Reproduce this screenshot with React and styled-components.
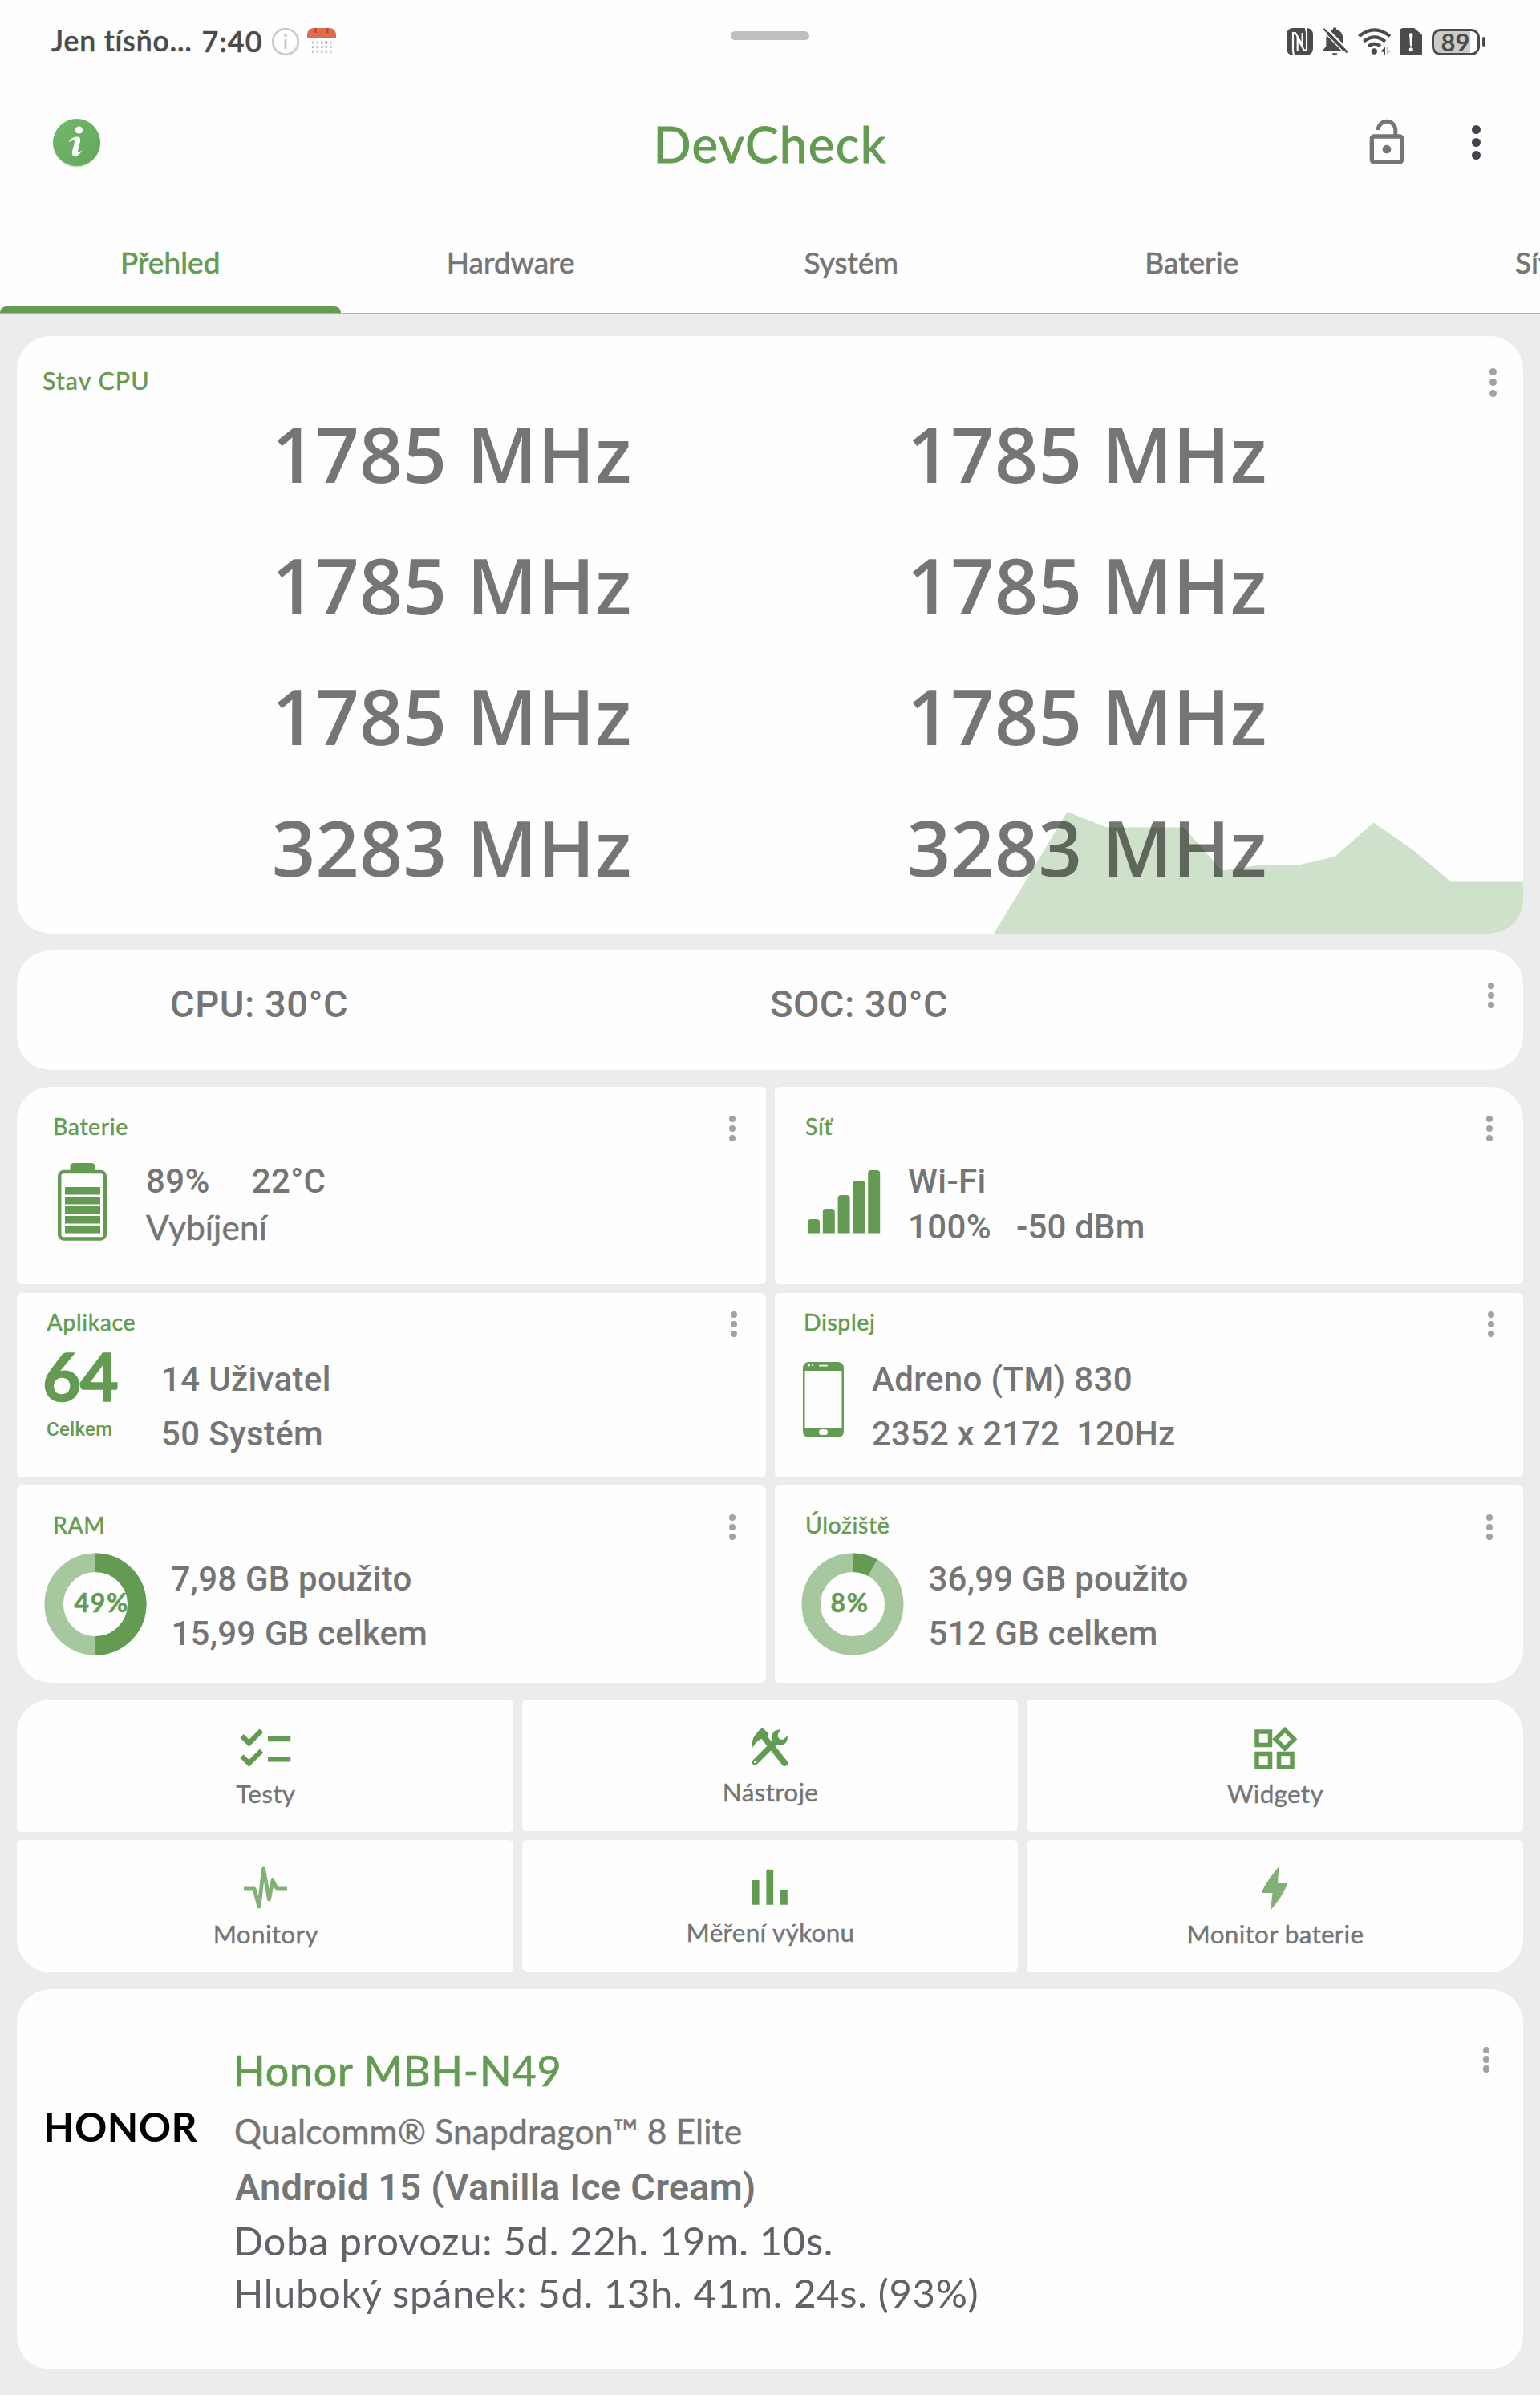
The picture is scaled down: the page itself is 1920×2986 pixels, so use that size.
import React from "react";
import styled, { createGlobalStyle } from "styled-components";

const GREEN = "#649b52";
const GREEN_SOFT = "#a7c79f";
const GREY = "#757575";
const LATO = '"Lato", "Open Sans", sans-serif';
const ROBOTO = '"Roboto", "Open Sans", sans-serif';
const OPEN = '"Open Sans", "Noto Sans", sans-serif';

const GlobalStyle = createGlobalStyle`
  * { box-sizing: border-box; }
  html, body { margin: 0; background: #ececec; }
  body { width: 1920px; height: 2986px; overflow: hidden; font-family: ${LATO}; }
  svg { display: block; flex: none; }
`;

const Text = styled.span`
  display: block;
  width: max-content;
  white-space: pre;
  line-height: ${(p) => (p.$lh ? p.$lh + "px" : 1)};
  font-family: ${(p) => p.$font || LATO};
  font-size: ${(p) => p.$size}px;
  font-weight: ${(p) => p.$weight || 400};
  color: ${(p) => p.$color || GREY};
  letter-spacing: ${(p) => p.$ls || 0}px;
  margin-top: ${(p) => p.$mt || 0}px;
  margin-left: ${(p) => p.$ml || 0}px;
  -webkit-text-stroke: ${(p) => p.$stroke || 0}px currentColor;
`;

/* ---------- header ---------- */

const Header = styled.header`
  height: 391px;
  background: #fefefe;
  border-bottom: 1px solid #b3b0b4;
  overflow: hidden;
`;

const StatusBar = styled.div`
  display: grid;
  grid-template-columns: 1fr 98px 1fr;
  align-items: center;
  height: 104px;
  padding: 0 68px 0 64px;
`;

const StatusLeft = styled.div`
  display: flex;
  align-items: center;
`;

const Handle = styled.div`
  height: 11px;
  margin-top: -16px;
  margin-left: 2px;
  margin-right: -2px;
  border-radius: 6px;
  background: #bfbfbf;
`;

const StatusRight = styled.div`
  display: flex;
  align-items: center;
  justify-content: flex-end;
`;

const Gap = styled.i`
  flex: none;
  width: ${(p) => p.$w}px;
`;

const BatteryPill = styled.div`
  display: flex;
  align-items: center;
  justify-content: center;
  width: 60px;
  height: 33px;
  border: 3px solid #4b4b4b;
  border-radius: 11px;
  background: linear-gradient(90deg, #cbcbcb 83%, #fefefe 83%);
`;

const BatteryNub = styled.div`
  width: 4px;
  height: 12px;
  margin-left: 3px;
  border-radius: 2px;
  background: #4b4b4b;
`;

const AppBar = styled.div`
  display: grid;
  grid-template-columns: 1fr auto 1fr;
  align-items: center;
  height: 147px;
  padding: 0 64px;
`;

const InfoBadge = styled.div`
  width: 62px;
  height: 62px;
`;

const Actions = styled.div`
  display: flex;
  align-items: center;
  justify-content: flex-end;
  gap: 74px;
  padding-right: 10px;
`;

const Tabs = styled.nav`
  display: flex;
  height: 139px;
`;

const Tab = styled.div`
  flex: none;
  display: flex;
  flex-direction: column;
  align-items: center;
  justify-content: space-between;
  width: 424.5px;
  padding-top: 57px;
`;

const Indicator = styled.div`
  width: 100%;
  height: 8px;
  border-radius: 8px 8px 0 0;
  background: ${(p) => (p.$on ? GREEN : "transparent")};
`;

/* ---------- menu dots ---------- */

const DotColumn = styled.div`
  flex: none;
  display: flex;
  flex-direction: column;
  gap: ${(p) => p.$gap}px;
`;

const Dot = styled.i`
  width: ${(p) => p.$d}px;
  height: ${(p) => p.$d}px;
  border-radius: 50%;
  background: ${(p) => p.$color};
`;

function Dots({ d = 8.4, gap = 3.6, color = "#a2a2a2" }) {
  return (
    <DotColumn $gap={gap}>
      {[0, 1, 2].map((i) => (
        <Dot key={i} $d={d} $color={color} />
      ))}
    </DotColumn>
  );
}

/* ---------- cards ---------- */

const Main = styled.main`
  display: flex;
  flex-direction: column;
  gap: 21px;
  padding: 28px 21px 0;
`;

const Card = styled.section`
  position: relative;
  height: ${(p) => p.$h}px;
  background: #fefefe;
  border-radius: ${(p) => p.$r || "42px"};
  overflow: hidden;
`;

const CardHead = styled.div`
  display: flex;
  align-items: flex-start;
  justify-content: space-between;
  padding: ${(p) => p.$pad};
`;

const CpuHead = styled(CardHead)`
  height: 65px;
`;

const CpuGrid = styled.div`
  display: grid;
  grid-template-columns: 792px 792px;
  grid-auto-rows: 163.7px;
  align-items: center;
  justify-items: center;
  padding-left: 146px;
`;

const CpuChart = styled.svg`
  position: absolute;
  right: 0;
  bottom: 0;
`;

const CpuValues = styled.div`
  position: relative;
`;

const TempRow = styled.div`
  display: grid;
  grid-template-columns: 748px 1fr auto;
  padding: 40px 36px 0 191px;
`;

const StatGrid = styled.div`
  display: grid;
  grid-template-columns: 933.5px 933.5px;
  column-gap: 11px;
  row-gap: 10.5px;
`;

const StatBody = styled.div`
  display: flex;
  align-items: flex-start;
  padding-left: ${(p) => p.$left}px;
`;

const Slot = styled.div`
  flex: none;
  width: ${(p) => p.$w}px;
  padding-top: ${(p) => p.$top}px;
`;

const Lines = styled.div`
  padding-top: ${(p) => p.$top}px;
`;

const Pair = styled.div`
  display: flex;
`;

const ToolGrid = styled.div`
  display: grid;
  grid-template-columns: 619px 617.5px 619.5px;
  column-gap: 11px;
  row-gap: 10.5px;
  align-items: start;
`;

const ToolCard = styled(Card)`
  display: flex;
  flex-direction: column;
  align-items: center;
  padding-top: ${(p) => p.$top}px;
`;

const ToolIcon = styled.div`
  display: flex;
  align-items: center;
  justify-content: center;
  width: 76px;
  height: 76px;
  margin-bottom: ${(p) => p.$mb}px;
`;

const DeviceRow = styled.div`
  display: flex;
  align-items: flex-start;
  padding: 72px 42px 0 33px;
`;

const Logo = styled.div`
  width: 237px;
  padding-top: 74px;
`;

const DeviceInfo = styled.div`
  flex: 1;
  padding-top: 3.5px;
`;

/* ---------- status icons ---------- */

const DARK = "#4b4b4b";

const NfcIcon = () => (
  <svg width="33" height="33.7" viewBox="42 44 99 101">
    <rect x="42" y="44" width="99" height="101" rx="23" fill={DARK} />
    <g fill="none" stroke="#fefefe" strokeWidth="6.500">
      <path d="M72 150Q66 138 66 126V62H75L101 107V62" />
      <path d="M83 128V83L108 127H117V62Q117 52 112 40" />
    </g>
  </svg>
);

const BellIcon = () => (
  <svg width="32" height="36" viewBox="177 42 96 108">
    <path
      d="M215 50Q215 43 222 43T229 50Q253 58 253 84V112L266 125V130H180V125L190 113V84Q190 58 215 50Z"
      fill={DARK}
    />
    <path d="M213 139H232Q230 148 222 148T213 139Z" fill={DARK} />
    <path d="M190 44L275 131" stroke="#fefefe" strokeWidth="7" />
    <path d="M181 48L269 136" stroke={DARK} strokeWidth="7" />
    <path d="M172 50L262 142" stroke="#fefefe" strokeWidth="4" />
  </svg>
);

const WifiIcon = () => (
  <svg width="42" height="34" viewBox="308 42 126 102">
    <g fill="none" stroke={DARK} strokeWidth="12">
      <path d="M312 73Q370 25 428 73" />
      <path d="M330 92Q370 60 410 92" />
      <path d="M347 110Q370 92 392 110" />
    </g>
    <circle cx="369" cy="129" r="11" fill={DARK} />
    <path d="M410 112V141H404V131H396V127Z" fill={DARK} />
    <path d="M415 112V141L434 126H421V112Z" fill="#c6c6c6" />
  </svg>
);

const AlertIcon = () => (
  <svg width="28.5" height="34.5" viewBox="464 41 85 103">
    <path
      d="M478 41H518L549 68V131Q549 144 536 144H477Q464 144 464 131V55Q464 41 478 41Z"
      fill={DARK}
    />
    <path d="M500 64Q500 60 506.500 60T513 64L510 108H503Z" fill="#fefefe" />
    <circle cx="506.500" cy="121" r="7.500" fill="#fefefe" />
  </svg>
);

const CircleInfoIcon = () => (
  <svg width="36" height="36" viewBox="0 0 36 36">
    <circle cx="18" cy="18" r="15.800" fill="none" stroke="#cccccc" strokeWidth="2.800" />
    <rect x="16.600" y="15" width="2.800" height="12" fill="#c4c4c4" />
    <rect x="16.400" y="8.500" width="3.200" height="3.600" fill="#c4c4c4" />
  </svg>
);

const CalendarIcon = () => (
  <svg width="36" height="34" viewBox="0 0 36 34">
    <path d="M0 12V9Q0 0 9 0H27Q36 0 36 9V12Z" fill="#dd6d50" />
    <rect x="9.500" y="0" width="2" height="6" fill="#b8402c" />
    <rect x="24.500" y="0" width="2" height="6" fill="#b8402c" />
    {[0, 1, 2].map((r) =>
      [0, 1, 2, 3, 4].map((c) => (
        <rect
          key={r + "-" + c}
          x={6 + c * 5.5}
          y={16.5 + r * 5.6}
          width="2.600"
          height="3"
          fill={r === 0 && c === 3 ? "#dd6d50" : "#c2c2c2"}
        />
      ))
    )}
  </svg>
);

const InfoIcon = () => (
  <svg width="62" height="64" viewBox="0 0 62 64">
    <defs>
      <linearGradient id="badge" x1="0" y1="0" x2="1" y2="1">
        <stop offset="0" stopColor="#74b56d" />
        <stop offset="1" stopColor="#62a95a" />
      </linearGradient>
    </defs>
    <circle cx="31.500" cy="32" r="29.500" fill="#c9dcc7" />
    <circle cx="31.500" cy="30.500" r="29.500" fill="url(#badge)" />
    <circle cx="34.500" cy="15" r="4.600" fill="#fefefe" />
    <path
      d="M22.500 28Q28 23 33.500 23.700Q37 24.300 36 29L33 41Q32.500 43.500 34.500 42.700L38.500 40.500Q35 47 29.500 47.500Q24.800 47.700 26 42L28.800 31Q29.400 27.500 27.500 27.700Q25 28.100 22.500 30Z"
      fill="#fefefe"
    />
  </svg>
);

const LockIcon = () => (
  <svg width="64" height="64" viewBox="0 0 24 24" fill={GREY}>
    <path d="M12 17c1.100 0 2-.9 2-2s-.9-2-2-2-2 .9-2 2 .9 2 2 2zm6-9h-1V6c0-2.760-2.240-5-5-5S7 3.240 7 6h1.900c0-1.710 1.390-3.100 3.100-3.100 1.710 0 3.100 1.390 3.100 3.100v2H6c-1.100 0-2 .9-2 2v10c0 1.100.9 2 2 2h12c1.100 0 2-.9 2-2V10c0-1.100-.9-2-2-2zm0 12H6V10h12v10z" />
  </svg>
);

/* ---------- stat icons ---------- */

const BatteryIcon = () => (
  <svg width="61" height="97" viewBox="0 0 61 97">
    <path d="M15.500 12V5Q15.500 0 20.500 0H41.500Q46.500 0 46.500 5V12Z" fill={GREEN} />
    <rect x="2.200" y="11" width="56.600" height="83.500" rx="5" fill="none" stroke={GREEN} strokeWidth="4.400" />
    {[0, 1, 2, 3, 4].map((i) => (
      <rect key={i} x="9" y={30 + i * 12} width="44" height="9.500" fill={GREEN} />
    ))}
  </svg>
);

const SignalIcon = () => (
  <svg width="91" height="79" viewBox="0 0 91 79">
    {[17.5, 30.5, 47.5, 65.5, 78.5].map((h, i) => (
      <path
        key={i}
        d={`M${i * 18.8} 78.500V${78.5 - h + 4}q0-4 4-4h7q4 0 4 4V78.500Z`}
        fill={GREEN}
      />
    ))}
  </svg>
);

const PhoneIcon = () => (
  <svg width="51" height="94" viewBox="0 0 51 94">
    <path
      fillRule="evenodd"
      d="M8 0H43Q51 0 51 8V86Q51 94 43 94H8Q0 94 0 86V8Q0 0 8 0ZM2.500 11V82.500H48.500V11Z"
      fill={GREEN}
    />
    <rect x="20" y="3.800" width="11" height="1.800" rx=".9" fill="#fefefe" />
    <circle cx="7.500" cy="4" r="1.600" fill="#fefefe" />
    <circle cx="12" cy="4" r="1" fill="#fefefe" />
    <rect x="20" y="84" width="11" height="7" rx="3.500" fill="#fefefe" />
  </svg>
);

function Donut({ share, label, x }) {
  const r = 51.8;
  const c = 2 * Math.PI * r;
  return (
    <svg width="128" height="128" viewBox="0 0 128 128">
      <g fill="none" strokeWidth="23.500" transform="rotate(-90 64 64)">
        <circle cx="64" cy="64" r={r} stroke={GREEN_SOFT} />
        <circle cx="64" cy="64" r={r} stroke={GREEN} strokeDasharray={`${c * share} ${c}`} />
      </g>
      <text
        x={x}
        y="73.500"
        fontFamily="Lato, sans-serif"
        fontSize="32"
        fontWeight="700"
        letterSpacing="1.700"
        fill={GREEN}
        stroke={GREEN}
        strokeWidth=".5"
      >
        {label}
      </text>
    </svg>
  );
}

/* ---------- tool icons ---------- */

const ChecklistIcon = () => (
  <svg width="75.600" height="75.600" viewBox="0 0 24 24" fill={GREEN}>
    <path d="M22 7h-9v2h9V7zm0 8h-9v2h9v-2zM5.540 11L2 7.460l1.410-1.410 2.120 2.120 4.240-4.240 1.410 1.410L5.540 11zm0 8L2 15.460l1.410-1.410 2.120 2.120 4.240-4.240 1.410 1.410L5.540 19z" />
  </svg>
);

const ToolsIcon = () => (
  <svg width="46.700" height="50" viewBox="20 36 140 150">
    <path d="M74 80L147 171" stroke={GREEN} strokeWidth="23" strokeLinecap="round" />
    <path d="M36 168L112 92" stroke={GREEN} strokeWidth="22" strokeLinecap="round" />
    <path d="M63 39L88 62L70 84Q62 78 54 84Q36 94 28 114Q20 88 37 66Q48 50 63 39Z" fill={GREEN} />
    <path
      d="M132 46Q104 46 99 68Q96 84 106 98Q122 110 142 103Q159 94 158 69L143 82Q134 86 127 80Q119 74 122 62Z"
      fill={GREEN}
    />
    <circle cx="37" cy="167" r="5" fill="#fefefe" />
  </svg>
);

const WidgetsIcon = () => (
  <svg width="66" height="66" viewBox="0 0 24 24" fill={GREEN}>
    <path d="M16.660 4.520l2.830 2.830-2.830 2.830-2.830-2.830 2.830-2.830M9 5v4H5V5h4m10 10v4h-4v-4h4M9 15v4H5v-4h4m7.660-13.310L11 7.340 16.660 13l5.660-5.660-5.660-5.650zM11 3H3v8h8V3zm10 10h-8v8h8v-8zm-10 0H3v8h8v-8z" />
  </svg>
);

const PulseIcon = () => (
  <svg width="54" height="54" viewBox="0 0 54 54">
    <path
      d="M0 28H13L19 50L24.500 3L31.500 41L36 17.500L41.500 28H54"
      fill="none"
      stroke="#82b075"
      strokeWidth="4.800"
      strokeLinejoin="round"
    />
  </svg>
);

const BarsIcon = () => (
  <svg width="75.600" height="75.600" viewBox="0 0 24 24" fill={GREEN}>
    <path d="M5 9.200h2.800V19H5zM10.600 5h2.800v14h-2.800zM16.200 13H19v6h-2.800z" />
  </svg>
);

const BoltIcon = () => (
  <svg width="32" height="55" viewBox="0 0 32 55">
    <path d="M21.500 0L20 21H31.500Q31 30 11 55L13.500 33H0Q2 24 21.500 0Z" fill="#82b075" />
  </svg>
);

/* ---------- page ---------- */

const TABS = ["Přehled", "Hardware", "Systém", "Baterie", "Síť"];

const CORES = ["1785 MHz", "1785 MHz", "1785 MHz", "1785 MHz", "1785 MHz", "1785 MHz", "3283 MHz", "3283 MHz"];

const Value = (p) => <Text $font={ROBOTO} $size={42} $weight={500} $ls={0.35} {...p} />;

function Stat({ h, r, pad, title, left, slotW, slotTop, icon, linesTop, children }) {
  return (
    <Card $h={h} $r={r}>
      <CardHead $pad={pad}>
        <Text $size={28.5} $stroke={0.5} $ls={0.6} $color={GREEN} $mt={-1.5}>
          {title}
        </Text>
        <Dots />
      </CardHead>
      <StatBody $left={left}>
        <Slot $w={slotW} $top={slotTop}>
          {icon}
        </Slot>
        <Lines $top={linesTop}>{children}</Lines>
      </StatBody>
    </Card>
  );
}

function Tool({ label, icon, h = 164.5, r, top, mb = 2 }) {
  return (
    <ToolCard $h={h} $r={r} $top={top}>
      <ToolIcon $mb={mb}>{icon}</ToolIcon>
      <Text $size={31.5} $ls={0.3} $stroke={0.4} $ml={1.5}>{label}</Text>
    </ToolCard>
  );
}

export default function App() {
  return (
    <>
      <GlobalStyle />
      <Header>
        <StatusBar>
          <StatusLeft>
            <Text $size={35.5} $weight={600} $stroke={0.5} $ls={0.9} $color="#4b4b4b" $mt={-3}>Jen tísňo…</Text>
            <Gap $w={12} />
            <Text $size={36} $weight={600} $stroke={0.5} $ls={1.1} $color="#4b4b4b" $mt={-2}>7:40</Text>
            <Gap $w={10} />
            <CircleInfoIcon />
            <Gap $w={9} />
            <CalendarIcon />
          </StatusLeft>
          <Handle />
          <StatusRight>
            <NfcIcon />
            <Gap $w={12} />
            <BellIcon />
            <Gap $w={12} />
            <WifiIcon />
            <Gap $w={10} />
            <AlertIcon />
            <Gap $w={12} />
            <BatteryPill>
              <Text $size={31} $weight={700} $color="#4b4b4b" $ml={-1}>89</Text>
            </BatteryPill>
            <BatteryNub />
          </StatusRight>
        </StatusBar>
        <AppBar>
          <InfoBadge>
            <InfoIcon />
          </InfoBadge>
          <Text $size={62} $stroke={1} $ls={1.3} $color={GREEN} $mt={3}>DevCheck</Text>
          <Actions>
            <LockIcon />
            <Dots d={11.5} gap={4.5} color="#44434d" />
          </Actions>
        </AppBar>
        <Tabs>
          {TABS.map((name, i) => (
            <Tab key={name}>
              <Text $size={37} $stroke={0.7} $ls={0.1} $color={i === 0 ? GREEN : GREY}>
                {name}
              </Text>
              <Indicator $on={i === 0} />
            </Tab>
          ))}
        </Tabs>
      </Header>

      <Main>
        <Card $h={745}>
          <CpuHead $pad="40px 33px 0 32px">
            <Text $size={30.5} $stroke={0.5} $ls={1} $color={GREEN}>Stav CPU</Text>
            <Dots d={9} gap={4.3} />
          </CpuHead>
          <CpuChart width="660" height="152" viewBox="0 0 660 152">
            <path
              d="M0 152L45 78L91.500 0L140.500 19.500H237L284.500 73.500L328.500 67H378L425 56L473.500 13.500L523 48L570 87.500H660V152Z"
              fill="#cfe0cb"
            />
          </CpuChart>
          <CpuValues>
            <CpuGrid>
              {CORES.map((v, i) => (
                <Text key={i} $font={OPEN} $size={95.5} $weight={600} $color="rgba(0,0,0,.54)">
                  {v}
                </Text>
              ))}
            </CpuGrid>
          </CpuValues>
        </Card>

        <Card $h={149}>
          <TempRow>
            <Text $font={ROBOTO} $size={47} $weight={500} $ls={0.5} $mt={3}>CPU: 30°C</Text>
            <Text $font={ROBOTO} $size={47} $weight={500} $ls={0.5} $mt={3}>SOC: 30°C</Text>
            <Dots />
          </TempRow>
        </Card>

        <StatGrid>
          <Stat h={246} r="42px 6px 6px 6px" pad="36px 37.5px 0 45px" title="Baterie"
            left={51} slotW={110} slotTop={27} icon={<BatteryIcon />} linesTop={20.5}>
            <Pair>
              <Value $lh={57.5}>89%</Value>
              <Value $lh={57.5} $ml={52}>22°C</Value>
            </Pair>
            <Text $size={42.5} $lh={57.5} $stroke={0.5} $ls={0.1}>Vybíjení</Text>
          </Stat>
          <Stat h={246} r="6px 42px 6px 6px" pad="36px 38px 0 38.5px" title="Síť"
            left={41.5} slotW={125} slotTop={36} icon={<SignalIcon />} linesTop={20.5}>
            <Value $lh={57.5}>Wi-Fi</Value>
            <Pair>
              <Value $lh={57.5}>100%</Value>
              <Value $lh={57.5} $ml={31} $ls={0.2}>-50 dBm</Value>
            </Pair>
          </Stat>
          <Stat h={230} r="6px" pad="23.5px 35.5px 0 37.5px" title="Aplikace"
            left={32} slotW={148} slotTop={7} linesTop={18.5}
            icon={
              <>
                <Text $size={83} $weight={700} $stroke={1.6} $color={GREEN} $ls={-1.5}>64</Text>
                <Text $font={ROBOTO} $size={24} $weight={500} $color={GREEN} $ls={0.3} $mt={13} $ml={5}>Celkem</Text>
              </>
            }>
            <Value $lh={67.7}>14 Uživatel</Value>
            <Value $lh={67.7}>50 Systém</Value>
          </Stat>
          <Stat h={230} r="6px" pad="23.5px 36px 0 36.5px" title="Displej"
            left={35.5} slotW={86} slotTop={31} icon={<PhoneIcon />} linesTop={18.5}>
            <Value $lh={67.7}>Adreno (TM) 830</Value>
            <Value $lh={67.7} $ls={0.1}>2352 x 2172  120Hz</Value>
          </Stat>
          <Stat h={246} r="6px 6px 6px 42px" pad="36px 37.5px 0 45px" title="RAM"
            left={34} slotW={158.5} slotTop={16} icon={<Donut share={0.499} label="49%" x={37.5} />} linesTop={14.5}>
            <Value $lh={68.4} $ls={0.2}>7,98 GB použito</Value>
            <Value $lh={68.4} $ls={0.2}>15,99 GB celkem</Value>
          </Stat>
          <Stat h={246} r="6px 6px 42px 6px" pad="36px 38px 0 38.5px" title="Úložiště"
            left={33} slotW={159} slotTop={16} icon={<Donut share={0.08} label="8%" x={36.5} />} linesTop={14.5}>
            <Value $lh={68.4} $ls={0.2}>36,99 GB použito</Value>
            <Value $lh={68.4} $ls={0.2}>512 GB celkem</Value>
          </Stat>
        </StatGrid>

        <ToolGrid>
          <Tool label="Testy" icon={<ChecklistIcon />} r="42px 6px 6px 6px" top={24} />
          <Tool label="Nástroje" icon={<ToolsIcon />} r="6px" h={163.5} top={20.5} mb={3.5} />
          <Tool label="Widgety" icon={<WidgetsIcon />} r="6px 42px 6px 6px" top={24} />
          <Tool label="Monitory" icon={<PulseIcon />} r="6px 6px 6px 42px" top={22} mb={4} />
          <Tool label="Měření výkonu" icon={<BarsIcon />} r="6px" h={163.5} top={20.5} mb={3.5} />
          <Tool label="Monitor baterie" icon={<BoltIcon />} r="6px 6px 42px 6px" top={22} mb={4} />
        </ToolGrid>

        <Card $h={474.5}>
          <DeviceRow>
            <Logo>
              <Text $size={50} $weight={700} $ls={0.4} $color="#000">HONOR</Text>
            </Logo>
            <DeviceInfo>
              <Text $size={52} $stroke={0.7} $ls={0.8} $color={GREEN}>Honor MBH-N49</Text>
              <Text $size={42.5} $stroke={0.5} $ls={0.15} $mt={29} $ml={1}>Qualcomm® Snapdragon™ 8 Elite</Text>
              <Text $font={ROBOTO} $size={47} $weight={600} $ls={0.2} $mt={24} $ml={2}>Android 15 (Vanilla Ice Cream)</Text>
              <Text $size={49} $color="#616167" $ls={0.7} $mt={19}>Doba provozu: 5d. 22h. 19m. 10s.</Text>
              <Text $size={49} $color="#616167" $ls={0.67} $mt={16}>Hluboký spánek: 5d. 13h. 41m. 24s. (93%)</Text>
            </DeviceInfo>
            <Dots />
          </DeviceRow>
        </Card>
      </Main>
    </>
  );
}
